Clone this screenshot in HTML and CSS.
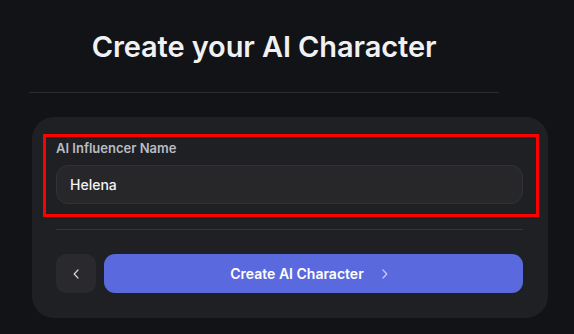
FILE: index.html
```html
<!DOCTYPE html>
<html lang="en">
<head>
<meta charset="utf-8">
<title>Create your AI Character</title>
<link rel="stylesheet" href="styles.css">
</head>
<body>
<main class="page">
  <header class="header">
    <h1 class="title">Create your AI Character</h1>
  </header>
  <section class="card">
    <div class="field">
      <label class="label" for="name">AI Influencer Name</label>
      <div class="input">Helena</div>
    </div>
    <hr class="divider">
    <div class="actions">
      <button class="btn-back" aria-label="Back">
        <svg width="6" height="10" viewBox="0 0 6 10" fill="none"><path d="M5 1L1.2 5L5 9" stroke="#d4d4d8" stroke-width="1.2" stroke-linecap="round" stroke-linejoin="round"/></svg>
      </button>
      <button class="btn-primary">
        <span>Create AI Character</span>
        <svg width="6" height="10" viewBox="0 0 6 10" fill="none"><path d="M1 1L4.8 5L1 9" stroke="#c9cdf5" stroke-width="1.2" stroke-linecap="round" stroke-linejoin="round"/></svg>
      </button>
    </div>
  </section>
</main>
</body>
</html>
```
FILE: styles.css
```css
* { box-sizing: border-box; }
html, body { margin: 0; padding: 0; }
body {
  background: #121317;
  font-family: Inter, "Noto Sans", "Liberation Sans", sans-serif;
  color: #f2f2f4;
  width: 574px;
  height: 334px;
  overflow: hidden;
}
.page {
  padding: 29px 0 0 29px;
  display: flex;
  flex-direction: column;
}
.header {
  width: 470px;
  display: flex;
  flex-direction: column;
  align-items: center;
  border-bottom: 1px solid #2c2d31;
  padding-bottom: 27px;
}
.title {
  margin: 0;
  font-size: 29px;
  line-height: 36px;
  font-weight: 600;
  color: #f1f1f3;
  letter-spacing: -0.1px;
}
.card {
  margin: 24px 0 0 3px;
  width: 516px;
  background: #1f2024;
  border-radius: 22px;
  padding: 21px 25px 25px 24px;
  display: flex;
  flex-direction: column;
}
.field {
  position: relative;
  display: flex;
  flex-direction: column;
}
.field::after {
  content: "";
  position: absolute;
  top: -4px;
  left: -13px;
  right: -16px;
  bottom: -13px;
  border: 3px solid #ff0000;
  pointer-events: none;
}
.label {
  font-size: 13px;
  line-height: 20px;
  font-weight: 600;
  color: #b9bcc3;
  margin-bottom: 7px;
}
.input {
  height: 39px;
  background: #27272a;
  border: 1px solid #323236;
  border-radius: 12px;
  padding: 0 13px;
  display: flex;
  align-items: center;
  font-size: 14px;
  font-weight: 500;
  color: #f4f4f6;
}
.divider {
  margin: 25px 0 0;
  border: 0;
  height: 1px;
  background: #35363a;
}
.actions {
  margin-top: 24px;
  display: flex;
  gap: 8px;
}
.btn-back {
  width: 40px;
  height: 39px;
  border: 0;
  border-radius: 10px;
  background: #2a2a2e;
  display: flex;
  align-items: center;
  justify-content: center;
  padding: 0;
}
.btn-primary {
  flex: 1;
  height: 39px;
  border: 0;
  border-radius: 11px;
  background: #5a69dd;
  color: #ffffff;
  font-family: inherit;
  font-size: 14px;
  font-weight: 600;
  display: flex;
  align-items: center;
  justify-content: center;
  gap: 18px;
  padding: 0 9px 0 0;
}
```
